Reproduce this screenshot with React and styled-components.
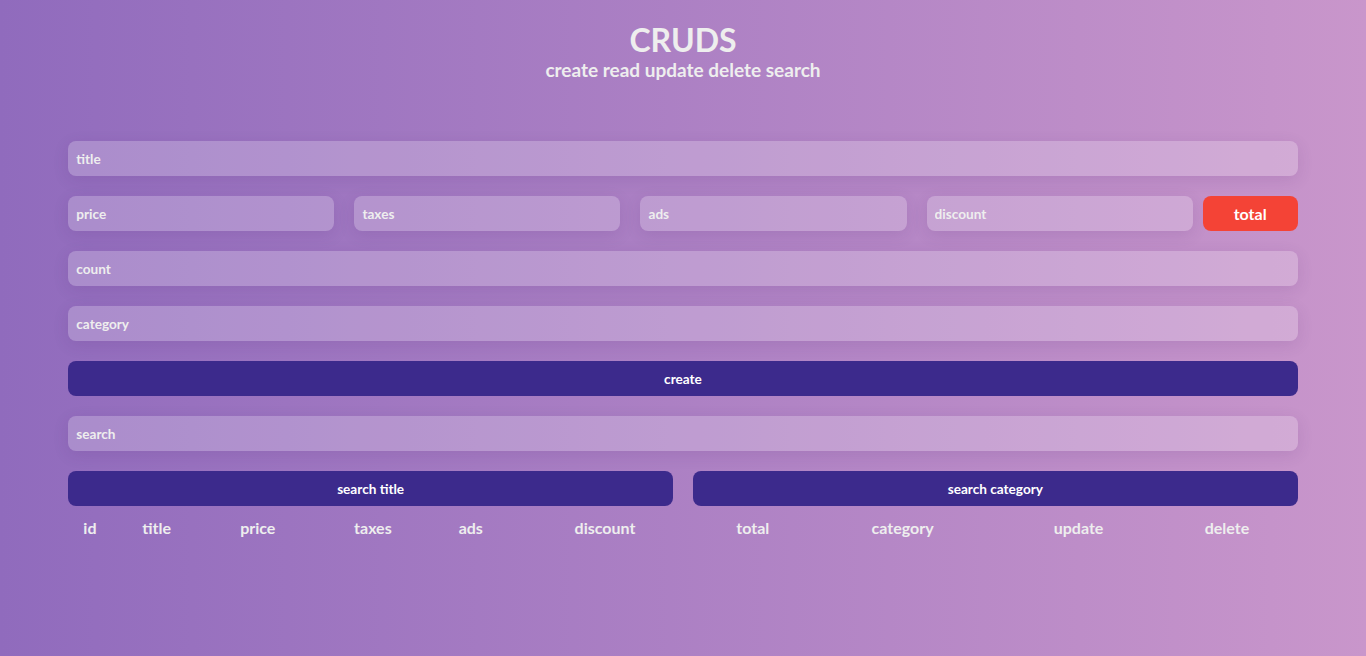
import styled, { createGlobalStyle } from "styled-components";

const GlobalStyle = createGlobalStyle`
  * {
    box-sizing: border-box;
  }
  body {
    margin: 0;
    min-height: 100vh;
    background: linear-gradient(to right, #906bbd, #c996cb);
    font-family: Lato, "Open Sans", sans-serif;
    color: #eeeeee;
  }
`;

const Page = styled.div`
  width: 90%;
  margin: 0 auto;
  padding-top: 21px;
`;

const Head = styled.div`
  text-align: center;
  margin-bottom: 60px;

  h1 {
    margin: 0;
    font-size: 32px;
    font-weight: 700;
    line-height: 38px;
    color: #eeeeee;
  }
  p {
    margin: 0;
    font-size: 19px;
    font-weight: 700;
    line-height: 22px;
    color: #eeeeee;
  }
`;

const Form = styled.div`
  display: flex;
  flex-direction: column;
  gap: 20px;
`;

const Input = styled.input`
  width: 100%;
  height: 35px;
  border: none;
  outline: none;
  border-radius: 8px;
  padding: 0 8px;
  background: rgba(255, 255, 255, 0.22);
  box-shadow: 0 4px 16px rgba(70, 30, 110, 0.12);
  font-family: Lato, sans-serif;
  font-size: 13.6px;
  font-weight: 700;
  color: #eeeeee;

  &::placeholder {
    color: #eeeeee;
  }
`;

const PriceRow = styled.div`
  display: flex;
  align-items: center;

  input {
    flex: 1;
    margin-right: 20px;
  }
  input:last-of-type {
    margin-right: 10px;
  }
`;

const Total = styled.small`
  width: 95px;
  height: 35px;
  border-radius: 8px;
  background: #f44336;
  color: #ffffff;
  font-size: 16px;
  font-weight: 700;
  display: flex;
  align-items: center;
  justify-content: center;
`;

const Button = styled.button`
  width: 100%;
  height: 35px;
  border: none;
  border-radius: 8px;
  background: #3c2a8c;
  color: #ffffff;
  font-family: Lato, sans-serif;
  font-size: 13.6px;
  font-weight: 700;
  cursor: pointer;
`;

const ButtonRow = styled.div`
  display: flex;
  gap: 20px;
`;

const Table = styled.table`
  width: 100%;
  margin-top: 9px;
  border-spacing: 1px 0;

  th {
    font-size: 16px;
    font-weight: 700;
    color: #eeeeee;
    padding: 3px 0;
    text-align: center;
  }
`;

const columns = [
  "id",
  "title",
  "price",
  "taxes",
  "ads",
  "discount",
  "total",
  "category",
  "update",
  "delete",
];

export default function App() {
  return (
    <>
      <GlobalStyle />
      <Page>
        <Head>
          <h1>CRUDS</h1>
          <p>create read update delete search</p>
        </Head>
        <Form>
          <Input type="text" placeholder="title" />
          <PriceRow>
            <Input type="number" placeholder="price" />
            <Input type="number" placeholder="taxes" />
            <Input type="number" placeholder="ads" />
            <Input type="number" placeholder="discount" />
            <Total>total</Total>
          </PriceRow>
          <Input type="number" placeholder="count" />
          <Input type="text" placeholder="category" />
          <Button>create</Button>
          <Input type="text" placeholder="search" />
          <ButtonRow>
            <Button>search title</Button>
            <Button>search category</Button>
          </ButtonRow>
        </Form>
        <Table>
          <thead>
            <tr>
              {columns.map((c) => (
                <th key={c}>{c}</th>
              ))}
            </tr>
          </thead>
          <tbody></tbody>
        </Table>
      </Page>
    </>
  );
}
